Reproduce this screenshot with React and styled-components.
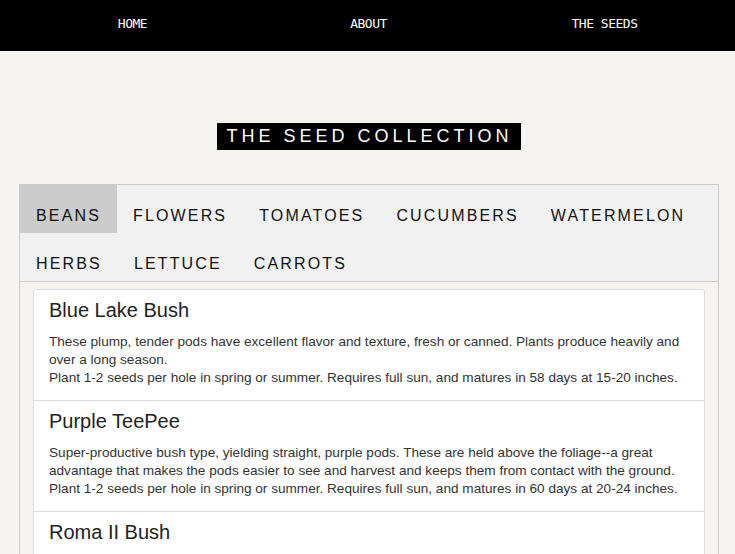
import React, { useState } from "react";
import styled, { createGlobalStyle } from "styled-components";

const GlobalStyle = createGlobalStyle`
  html, body { margin: 0; padding: 0; }
  body {
    background: #f5f4f0;
    font-family: "Liberation Sans", Arial, sans-serif;
    color: #222;
  }
`;

const Nav = styled.nav`
  height: 51px;
  background: #000;
  display: grid;
  grid-template-columns: repeat(3, 236px);
  justify-content: center;
  align-items: center;
  padding-left: 2px;
`;

const NavLink = styled.a`
  justify-self: center;
  color: #fff;
  text-decoration: none;
  font-family: "DejaVu Sans Mono", "Liberation Mono", monospace;
  font-size: 13px;
  letter-spacing: -0.5px;
  line-height: 16px;
  margin-top: -3px;
`;

const Main = styled.main`
  padding: 72px 16px 0 19px;
  display: flex;
  flex-direction: column;
  align-items: center;
`;

const Title = styled.h1`
  margin: 0 0 34px;
  background: #000;
  color: #fff;
  font-family: "Liberation Sans", Arial, sans-serif;
  font-weight: 400;
  font-size: 18px;
  line-height: 27px;
  letter-spacing: 4px;
  padding: 0 8px 0 9px;
`;

const Panel = styled.section`
  width: 700px;
  box-sizing: border-box;
  border: 1px solid #cccccc;
  border-bottom: none;
  background: #f5f4f0;
`;

const TabBar = styled.div`
  display: flex;
  flex-wrap: wrap;
  background: #f1f1f1;
  border-bottom: 1px solid #cccccc;
`;

const Tab = styled.button`
  border: none;
  margin: 0;
  background: ${(p) => (p.$active ? "#cccccc" : "transparent")};
  color: #111;
  font-family: "Liberation Sans", Arial, sans-serif;
  font-size: 16px;
  line-height: 20px;
  letter-spacing: 2.15px;
  padding: 21px 16px 7px;
  cursor: pointer;
`;

const Content = styled.div`
  padding: 7px 13px 0 13px;
`;

const Card = styled.div`
  background: #fff;
  border: 1px solid #dddddd;
  border-bottom: none;
  border-radius: 3px 3px 0 0;
`;

const Item = styled.article`
  padding: 8px 16px 13px 15px;
  border-bottom: 1px solid #dddddd;
`;

const ItemTitle = styled.h2`
  margin: 0 0 11px;
  font-family: "Liberation Sans", Arial, sans-serif;
  font-weight: 400;
  font-size: 20px;
  line-height: 24px;
  color: #222;
`;

const Desc = styled.p`
  margin: 0;
  font-size: 13.6px;
  line-height: 18px;
  color: #333;
`;

const tabs = [
  "BEANS",
  "FLOWERS",
  "TOMATOES",
  "CUCUMBERS",
  "WATERMELON",
  "HERBS",
  "LETTUCE",
  "CARROTS",
];

const seeds = [
  {
    name: "Blue Lake Bush",
    desc: "These plump, tender pods have excellent flavor and texture, fresh or canned. Plants produce heavily and over a long season.",
    plant: "Plant 1-2 seeds per hole in spring or summer. Requires full sun, and matures in 58 days at 15-20 inches.",
  },
  {
    name: "Purple TeePee",
    desc: "Super-productive bush type, yielding straight, purple pods. These are held above the foliage--a great advantage that makes the pods easier to see and harvest and keeps them from contact with the ground.",
    plant: "Plant 1-2 seeds per hole in spring or summer. Requires full sun, and matures in 60 days at 20-24 inches.",
  },
  {
    name: "Roma II Bush",
    desc: "Flat, stringless pods with a rich, meaty bean flavor. Excellent fresh, frozen or canned.",
    plant: "Plant 1-2 seeds per hole in spring or summer. Requires full sun, and matures in 59 days at 18-20 inches.",
  },
];

export default function App() {
  const [active, setActive] = useState("BEANS");
  return (
    <>
      <GlobalStyle />
      <Nav>
        <NavLink href="#">HOME</NavLink>
        <NavLink href="#">ABOUT</NavLink>
        <NavLink href="#">THE SEEDS</NavLink>
      </Nav>
      <Main>
        <Title>THE SEED COLLECTION</Title>
        <Panel>
          <TabBar>
            {tabs.map((t) => (
              <Tab key={t} $active={t === active} onClick={() => setActive(t)}>
                {t}
              </Tab>
            ))}
          </TabBar>
          <Content>
            <Card>
              {seeds.map((s) => (
                <Item key={s.name}>
                  <ItemTitle>{s.name}</ItemTitle>
                  <Desc>{s.desc}</Desc>
                  <Desc>{s.plant}</Desc>
                </Item>
              ))}
            </Card>
          </Content>
        </Panel>
      </Main>
    </>
  );
}
